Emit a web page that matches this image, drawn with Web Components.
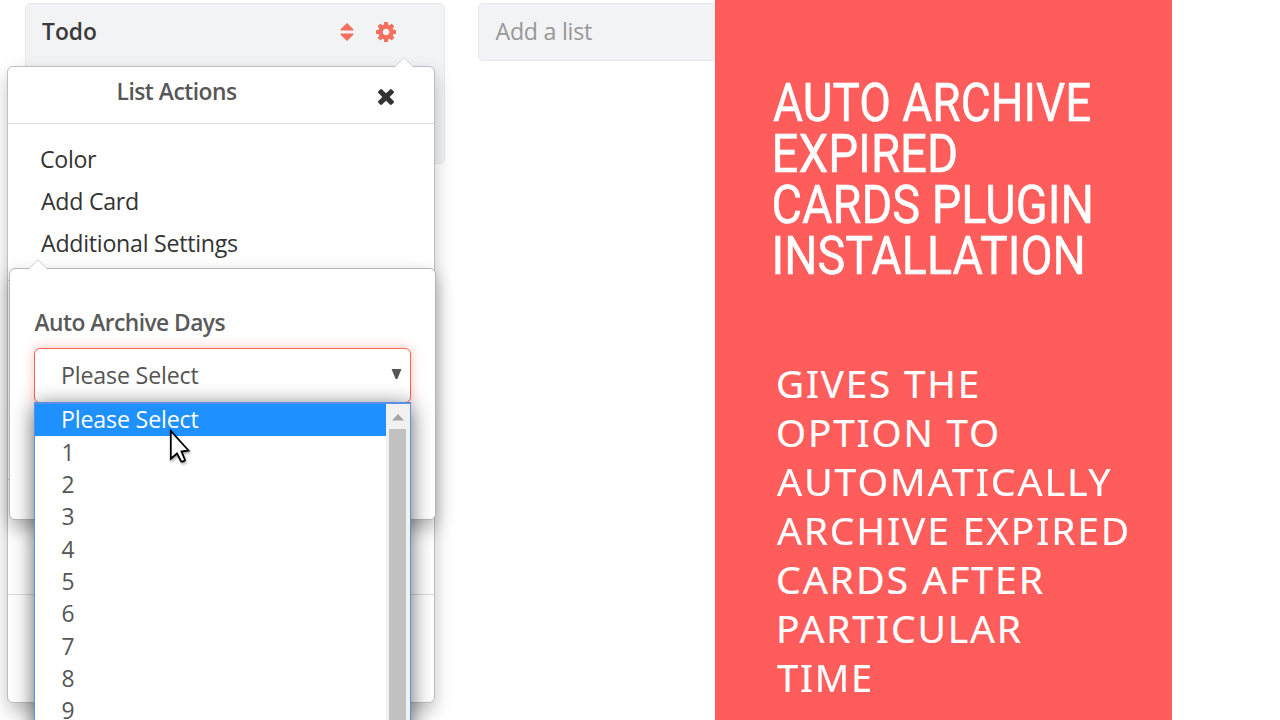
<!DOCTYPE html>
<html lang="en">
<head>
<meta charset="utf-8">
<title>Auto Archive Expired Cards</title>
<style>
html, body { margin: 0; height: 100%; overflow: hidden; background: #fff; }
body { font-family: "Open Sans", "Noto Sans", sans-serif; }
</style>
</head>
<body>
<app-page>
  <board-list slot="board" name="Todo"></board-list>
  <add-list slot="board"></add-list>
  <action-menu slot="overlay"></action-menu>
  <settings-popover slot="overlay">
    <select-field></select-field>
  </settings-popover>
  <option-list slot="overlay"></option-list>
  <mouse-pointer slot="overlay"></mouse-pointer>
  <promo-panel slot="promo"></promo-panel>
</app-page>

<script>
function define(name, html, setup) {
  const t = document.createElement('template');
  t.innerHTML = html;
  customElements.define(name, class extends HTMLElement {
    connectedCallback() {
      if (this.shadowRoot) return;
      const root = this.attachShadow({ mode: 'open' });
      root.append(t.content.cloneNode(true));
      if (setup) setup.call(this, root);
    }
  });
}

// One line of text whose ink spans exactly `w` pixels, by letter spacing or by horizontal scale.
define('fit-text', `
<style>
:host { display: block; white-space: nowrap; width: max-content; }
span { display: inline-block; transform-origin: 0 50%; }
</style><span><slot></slot></span>`, function (root) {
  const cs = getComputedStyle(this);
  const text = this.textContent;
  const ctx = document.createElement('canvas').getContext('2d');
  ctx.font = `${cs.fontWeight} ${cs.fontSize} ${cs.fontFamily}`;
  const m = ctx.measureText(text);
  const bearing = -m.actualBoundingBoxLeft;
  const ink = m.actualBoundingBoxRight - bearing;
  const w = parseFloat(this.getAttribute('w'));
  const span = root.querySelector('span');
  if (this.hasAttribute('scale')) {
    const ls = parseFloat(this.getAttribute('scale')) || 0;
    const s = w / (ink + ls * (text.length - 1));
    span.style.letterSpacing = ls + 'px';
    span.style.transform = `translateX(${-bearing * s}px) scaleX(${s})`;
  } else {
    span.style.letterSpacing = (w - ink) / (text.length - 1) + 'px';
    span.style.transform = `translateX(${-bearing}px)`;
  }
});

define('app-page', `
<style>
:host { display: grid; grid-template-columns: 715px 457px 1fr; width: 1280px; height: 720px; position: relative; overflow: hidden; background: #fff; }
.board { display: flex; align-items: flex-start; gap: 33px; padding: 2.5px 0 0 24.5px; overflow: hidden; }
</style>
<div class="board"><slot name="board"></slot></div>
<slot name="promo"></slot>
<slot name="overlay"></slot>`);

define('board-list', `
<style>
:host { display: block; box-sizing: border-box; flex: none; width: 420px; height: 161px; border: 1px solid #e6e8ea; border-radius: 5px; background: #f2f3f5; }
header { display: flex; align-items: center; height: 56px; padding: 0 47.5px 0 16.5px; font: 600 22.8px/32px "Open Sans", sans-serif; color: #3a3a3a; }
.icons { margin-left: auto; display: flex; align-items: center; gap: 22px; }
svg { display: block; fill: #f7705f; }
</style>
<header><fit-text w="54">Todo</fit-text>
<div class="icons">
<svg width="14" height="20" viewBox="0 0 14 20"><path d="M7 1 13.4 7.2Q13.8 8.4 13 8.5H1Q.2 8.4.6 7.2ZM7 19 13.4 12.8Q13.8 11.6 13 11.5H1Q.2 11.6.6 12.8Z"/></svg>
<svg width="20" height="20" viewBox="0 128 1536 1536"><path d="M1024 896q0-106-75-181t-181-75-181 75-75 181 75 181 181 75 181-75 75-181zm512-109v222q0 12-8 23t-20 13l-185 28q-19 54-39 91 35 50 107 138 10 12 10 25t-9 23q-27 37-99 108t-94 71q-12 0-26-9l-138-108q-44 23-91 38-16 136-29 186-7 28-36 28h-222q-14 0-24.5-8.5t-11.5-21.5l-28-184q-49-16-90-37l-141 107q-10 9-25 9-14 0-25-11-126-114-165-168-7-10-7-23 0-12 8-23 15-21 51-66.5t54-70.5q-27-50-41-99l-183-27q-13-2-21-12.5t-8-23.5v-222q0-12 8-23t19-13l186-28q14-46 39-92-40-57-107-138-10-12-10-24 0-10 9-23 26-36 98.5-107.5t94.5-71.5q13 0 26 10l138 107q44-23 91-38 16-136 29-186 7-28 36-28h222q14 0 24.5 8.5t11.5 21.5l28 184q49 16 90 37l142-107q9-9 24-9 13 0 25 10 129 119 165 170 7 8 7 22 0 12-8 23-15 21-51 66.5t-54 70.5q26 50 41 98l183 28q13 2 21 12.5t8 23.5z"/></svg>
</div></header>`, function (root) {
  root.querySelector('fit-text').setAttribute('aria-label', this.getAttribute('name'));
});

define('add-list', `
<style>
:host { display: flex; align-items: center; box-sizing: border-box; flex: none; width: 420px; height: 58px; padding: 0 0 2px 17px; border: 1px solid #e6e8ea; border-radius: 5px; background: #f2f3f5; font: 23.2px/32px "Open Sans", sans-serif; color: #979797; }
</style><fit-text w="96.5">Add a list</fit-text>`);

define('action-menu', `
<style>
:host { display: block; position: absolute; left: 7px; top: 66px; box-sizing: border-box; width: 428px; height: 637px; background: #fff; border: 1px solid #bdbec0; border-radius: 6px; box-shadow: 0 8px 18px rgba(0,0,0,.23); }
.tip { position: absolute; left: 385px; top: -10px; }
header { display: flex; align-items: center; box-sizing: border-box; height: 57px; padding: 0 40px 0 110.5px; border-bottom: 1px solid #ddd; font: 600 22.8px/32px "Open Sans", sans-serif; color: #575757; }
header fit-text { margin-top: -7px; }
header svg { margin: 4px 0 0 auto; fill: #333; }
nav { padding: 13.5px 0 0 33px; height: 142.5px; border-bottom: 1px solid #ccc; font: 23.2px/42px "Open Sans", sans-serif; color: #333; }
.group { height: 198px; border-bottom: 1px solid #ccc; }
.group + .group { height: 114px; border-color: #ddd; }
</style>
<svg class="tip" width="22" height="12"><path d="M1 11 11 1 21 11V12H1Z" fill="#fff"/><path d="M1 10.5 11 .8 21 10.5" fill="none" stroke="#d3d4d6"/></svg>
<header><fit-text w="118.5">List Actions</fit-text>
<svg width="16" height="16" viewBox="302 366 1188 1188"><path d="M1490 1322q0 40-28 68l-136 136q-28 28-68 28t-68-28l-294-294-294 294q-28 28-68 28t-68-28l-136-136q-28-28-28-68t28-68l294-294-294-294q-28-28-28-68t28-68l136-136q28-28 68-28t68 28l294 294 294-294q28-28 68-28t68 28l136 136q28 28 28 68t-28 68l-294 294 294 294q28 28 28 68z"/></svg></header>
<nav><fit-text w="56">Color</fit-text><fit-text w="97">Add Card</fit-text><fit-text w="197">Additional Settings</fit-text></nav>
<div class="group"></div><div class="group"></div>`);

define('settings-popover', `
<style>
:host { display: block; position: absolute; left: 9px; top: 268px; box-sizing: border-box; width: 427px; height: 252px; padding: 38px 24px 0; background: #fff; border: 1px solid #b5b5b5; border-radius: 6px; box-shadow: 0 8px 18px rgba(0,0,0,.3); }
.tip { position: absolute; left: 17px; top: -10px; }
.label { font: 600 22.8px/32px "Open Sans", sans-serif; color: #5a5a5a; margin: 0 0 9px .5px; }
</style>
<svg class="tip" width="22" height="12"><path d="M1 11 11 1 21 11V12H1Z" fill="#fff"/><path d="M1 10.5 11 .8 21 10.5" fill="none" stroke="#ccc"/></svg>
<fit-text class="label" w="191">Auto Archive Days</fit-text>
<slot></slot>`);

define('select-field', `
<style>
:host { display: flex; align-items: center; justify-content: space-between; box-sizing: border-box; width: 377px; height: 55px; padding: 0 8px 0 28px; border: 1.5px solid #f76650; border-radius: 6px; background: #fff; box-shadow: 0 0 12px rgba(247,102,80,.4); font: 23.2px/32px "Open Sans", sans-serif; color: #555; }
svg { fill: #555; margin-top: -3px; }
fit-text { margin-top: -1px; }
</style>
<fit-text w="135.5">Please Select</fit-text>
<svg width="11" height="10" viewBox="0 0 11 10"><path d="M.5 0H10.5L6.3 10H4.7Z"/></svg>`);

define('option-list', `
<style>
:host { display: grid; grid-template-columns: 350.5px 1fr; position: absolute; left: 34px; top: 402px; box-sizing: border-box; width: 377px; height: 360px; border: 1px solid #5a8fe6; border-top-width: 2px; background: #fff; box-shadow: 0 4px 20px rgba(0,0,0,.62); font: 23.2px/32.3px "Open Sans", sans-serif; color: #555; }
.row { height: 32.3px; padding-left: 26.5px; font-size: 22.8px; }
.row.on { background: #1e90ff; color: #fff; padding-left: 28px; margin-bottom: .5px; font-size: 23.2px; line-height: 31.3px; }
.bar { background: #f1f1f1; display: flex; flex-direction: column; align-items: center; }
.bar svg { display: block; margin: 10px 0 8px; fill: #a3a3a3; }
.thumb { width: 17px; flex: 1; background: #c1c1c1; margin-right: 1px; }
</style>
<div class="rows"><div class="row on"><fit-text w="135.5">Please Select</fit-text></div></div>
<div class="bar"><svg width="12" height="7"><path d="M6 0 12 6.5H0Z"/></svg><div class="thumb"></div></div>`, function (root) {
  const rows = root.querySelector('.rows');
  for (let i = 1; i <= 9; i++) {
    const r = document.createElement('div');
    r.className = 'row';
    r.textContent = i;
    rows.append(r);
  }
});

define('mouse-pointer', `
<style>:host { display: block; position: absolute; left: 169px; top: 429px; filter: drop-shadow(1px 2px 1px rgba(0,0,0,.3)); }svg { display: block; }</style>
<svg width="22" height="36"><path d="M1.8 2V29.8L8 24.5 12.2 32.5Q15 33 16 31L12.5 22.5 19.5 21.5Z" fill="#fff" stroke="#000" stroke-width="1.8"/></svg>`);

define('promo-panel', `
<style>
:host { display: block; box-sizing: border-box; padding: 77px 0 0 58px; background: #ff5c5c; color: #fff; }
.title { font: 400 54px/51px Roboto, sans-serif; margin-bottom: 78px; -webkit-text-stroke: .5px #fff; }
.copy { font: 400 38px/49px "Noto Sans", sans-serif; padding-left: 4.5px; -webkit-text-stroke: .2px #fff; }
.in { margin-left: 2px; }
.out { margin-left: -1px; }
</style>
<div class="title">
<fit-text scale="0" w="317">AUTO ARCHIVE</fit-text>
<fit-text scale="0" w="181" class="in">EXPIRED</fit-text>
<fit-text scale="0" w="316" style="margin-left:1px">CARDS PLUGIN</fit-text>
<fit-text scale="0" w="307" class="in">INSTALLATION</fit-text>
</div>
<div class="copy">
<fit-text scale="1.8" w="199">GIVES THE</fit-text>
<fit-text scale="1.8" w="219.5">OPTION TO</fit-text>
<fit-text scale="1.8" w="334" class="out">AUTOMATICALLY</fit-text>
<fit-text scale="1.8" w="350.5" class="out">ARCHIVE EXPIRED</fit-text>
<fit-text scale="1.8" w="265.5">CARDS AFTER</fit-text>
<fit-text scale="1.8" w="242.5" style="margin-left:1px">PARTICULAR</fit-text>
<fit-text scale="1.8" w="93" class="out">TIME</fit-text>
</div>`);
</script>
</body>
</html>
